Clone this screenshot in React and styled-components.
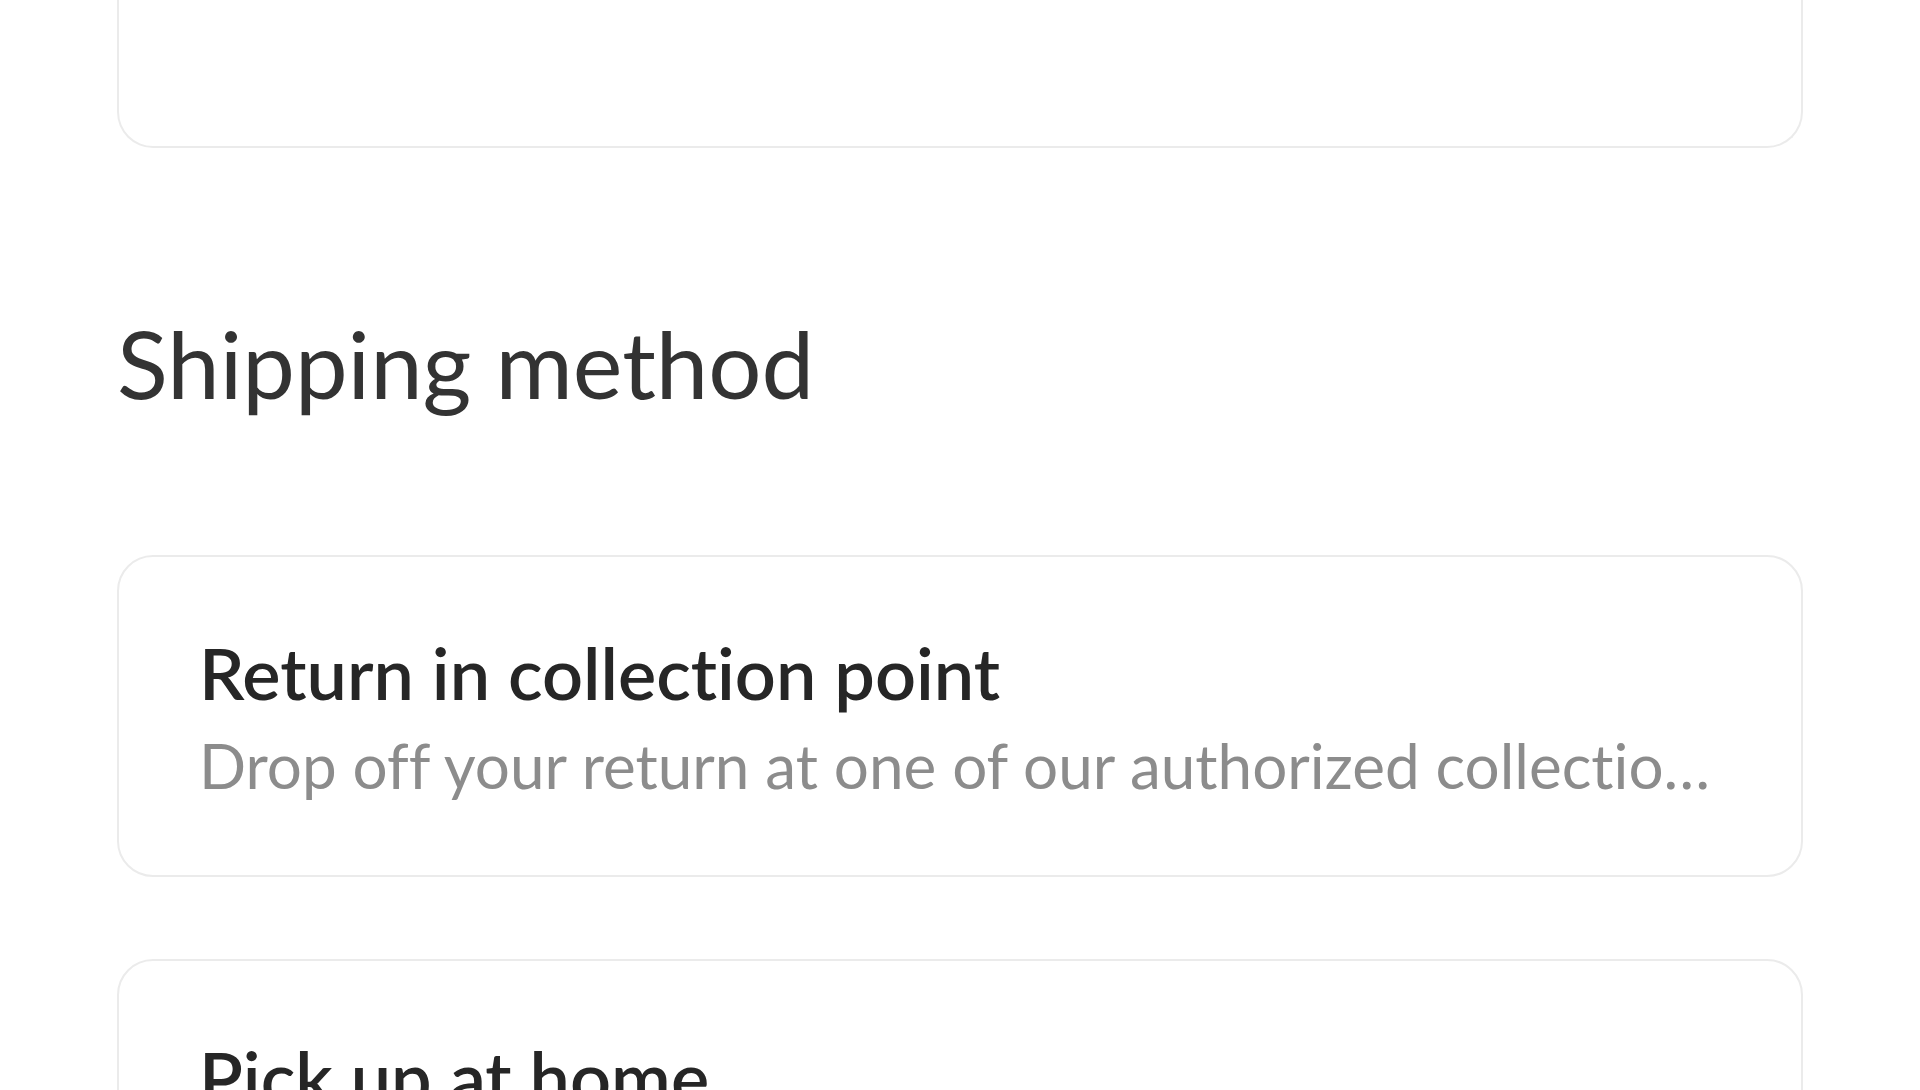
import styled, { createGlobalStyle } from "styled-components";

const GlobalStyle = createGlobalStyle`
  html, body {
    margin: 0;
    padding: 0;
    background: #ffffff;
  }
  body {
    font-family: Lato, "Open Sans", sans-serif;
    font-variant-ligatures: none;
    color: #2a2a2a;
    overflow: hidden;
  }
`;

const methods = [
  {
    title: "Return in collection point",
    text: "Drop off your return at one of our authorized collection points near you.",
  },
  {
    title: "Pick up at home",
    text: "A courier will pick up your return at the address you choose.",
  },
];

export default function App() {
  return (
    <>
      <GlobalStyle />
      <Page>
        <Card $tail />
        <SectionTitle>Shipping method</SectionTitle>
        <Options>
          {methods.map(({ title, text }) => (
            <Card key={title}>
              <OptionTitle>{title}</OptionTitle>
              <OptionText>{text}</OptionText>
            </Card>
          ))}
        </Options>
      </Page>
    </>
  );
}

const Page = styled.main`
  display: flex;
  flex-direction: column;
  padding: 0 117px;
  height: 1090px;
  box-sizing: border-box;
  overflow: hidden;
`;

const Card = styled.div`
  display: flex;
  flex-direction: column;
  gap: 8px;
  min-width: 0;
  background: #ffffff;
  border: 2px solid #ebebeb;
  border-radius: 36px;
  padding: 70px 80px;
  flex-shrink: 0;
  ${({ $tail }) =>
    $tail &&
    `
    height: 148px;
    box-sizing: border-box;
    border-top: none;
    border-top-left-radius: 0;
    border-top-right-radius: 0;
    padding: 0;
  `}
`;

const SectionTitle = styled.h2`
  margin: 159px 0 135px;
  font-size: 94px;
  line-height: 1.2;
  font-weight: 400;
  color: #333333;
`;

const Options = styled.div`
  display: flex;
  flex-direction: column;
  gap: 82px;
`;

const OptionTitle = styled.h3`
  margin: 0;
  font-size: 72px;
  line-height: 90px;
  font-weight: 600;
  color: #262626;
  white-space: nowrap;
  overflow: hidden;
  text-overflow: ellipsis;
`;

const OptionText = styled.p`
  margin: 0;
  font-size: 62px;
  line-height: 80px;
  font-weight: 400;
  color: #8c8c8c;
  white-space: nowrap;
  overflow: hidden;
  text-overflow: ellipsis;
`;
